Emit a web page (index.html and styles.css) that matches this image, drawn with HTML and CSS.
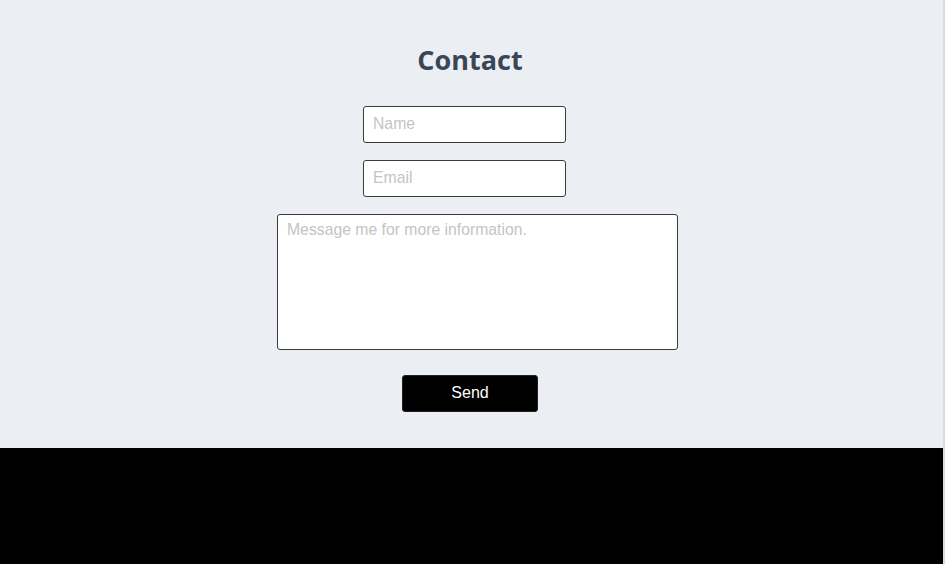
FILE: index.html
```html
<!DOCTYPE html>
<html lang="en">
<head>
<meta charset="utf-8">
<title>Contact</title>
<link rel="stylesheet" href="styles.css">
</head>
<body>
<div class="page">
  <section class="contact">
    <h1 class="title">Contact</h1>
    <form class="form">
      <input class="field field-short" type="text" placeholder="Name">
      <input class="field field-short" type="email" placeholder="Email">
      <textarea class="field field-area" placeholder="Message me for more information."></textarea>
      <button class="send" type="button">Send</button>
    </form>
  </section>
  <footer class="footer"></footer>
</div>
</body>
</html>
```
FILE: styles.css
```css
* { box-sizing: border-box; }
html, body { margin: 0; padding: 0; }
body {
  width: 945px;
  height: 564px;
  overflow: hidden;
  background: #000;
  font-family: "Liberation Sans", Arial, sans-serif;
}
.page {
  display: flex;
  flex-direction: column;
  height: 564px;
  border-right: 2px solid #d9dbdf;
}
.contact {
  background: #ebeff4;
  height: 448px;
  display: flex;
  flex-direction: column;
  align-items: center;
  padding-top: 40px;
  padding-right: 3px;
}
.title {
  margin: 0;
  font-family: "Open Sans", sans-serif;
  font-weight: 700;
  font-size: 27px;
  line-height: 40px;
  color: #3a4656;
}
.form {
  display: flex;
  flex-direction: column;
  align-items: center;
  margin-top: 26px;
}
.field {
  display: block;
  border: 1px solid #3a3a3a;
  border-radius: 3px;
  background: #fff;
  font-family: "Liberation Sans", Arial, sans-serif;
  font-size: 15.75px;
  color: #333;
  padding: 0 9px 2px;
  outline: none;
}
.field::placeholder { color: #c4c4c4; }
.field-short {
  width: 203px;
  height: 37px;
  margin: 0 11px 17px 0;
}
.field-area {
  width: 401px;
  height: 136px;
  resize: none;
  padding: 6px 9px;
  margin: 0 0 0 15px;
}
.send {
  margin-top: 25px;
  width: 136px;
  height: 37px;
  background: #000;
  color: #fff;
  border: 1px solid #222;
  border-radius: 3px;
  font-family: "Liberation Sans", Arial, sans-serif;
  font-size: 16px;
  padding: 0 0 2px;
}
.footer {
  flex: 1;
  background: #000;
}
```
